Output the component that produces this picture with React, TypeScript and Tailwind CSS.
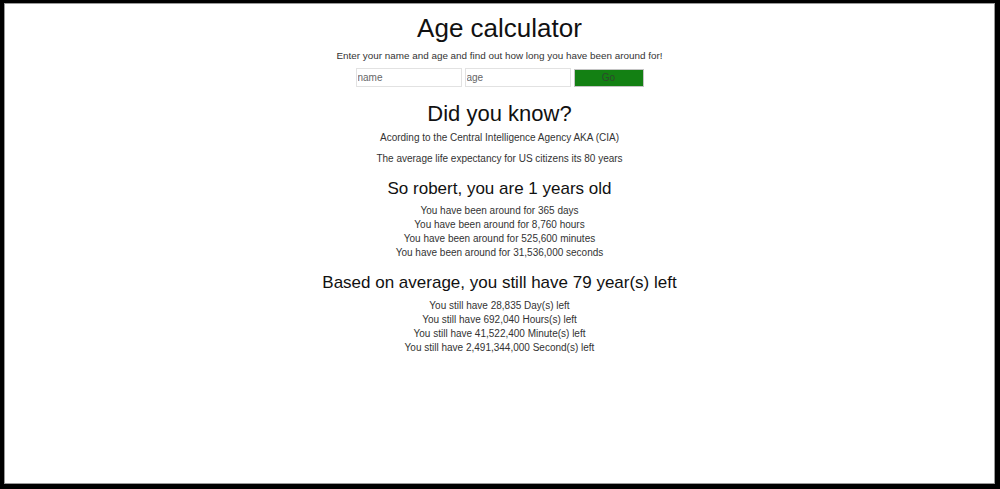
import { useState } from "react";

const font = { fontFamily: '"Liberation Sans", Arial, Helvetica, sans-serif' };

const aroundLines = [
  "You have been around for 365 days",
  "You have been around for 8,760 hours",
  "You have been around for 525,600 minutes",
  "You have been around for 31,536,000 seconds",
];

const leftLines = [
  "You still have 28,835 Day(s) left",
  "You still have 692,040 Hours(s) left",
  "You still have 41,522,400 Minute(s) left",
  "You still have 2,491,344,000 Second(s) left",
];

export default function App() {
  const [name, setName] = useState("");
  const [age, setAge] = useState("");

  return (
    <div className="h-[489px] w-[1000px] bg-black pt-[3px] pl-[4px] pr-[5px] pb-[5px]" style={font}>
      <div className="h-full w-full border border-[#9a9a9a] bg-white text-center">
        <h1 className="pt-[9px] text-[26px] leading-[30px] text-[#111]">Age calculator</h1>
        <p className="mt-[6px] text-[9.9px] leading-[14px] text-[#333]">
          Enter your name and age and find out how long you have been around for!
        </p>

        <div className="mt-[5px] flex justify-center gap-[3px]">
          <input
            value={name}
            onChange={(e) => setName(e.target.value)}
            placeholder="name"
            className="h-[19px] w-[106px] border border-[#e2e2e2] px-[1px] text-[10px] text-[#333] outline-none placeholder:text-[#666]"
          />
          <input
            value={age}
            onChange={(e) => setAge(e.target.value)}
            placeholder="age"
            className="h-[19px] w-[106px] border border-[#e2e2e2] px-[1px] text-[10px] text-[#333] outline-none placeholder:text-[#666]"
          />
          <button className="mt-[1px] h-[18px] w-[70px] border border-[#c4c4c4] bg-[#138013] text-[10px] leading-none text-[#2d4a2d]">
            Go
          </button>
        </div>

        <h2 className="mt-[14px] text-[22px] leading-[26px] text-[#111]">Did you know?</h2>
        <p className="mt-[4px] text-[10px] leading-[14px] text-[#333]">
          Acording to the Central Intelligence Agency AKA (CIA)
        </p>
        <p className="mt-[7px] text-[10px] leading-[14px] text-[#333]">
          The average life expectancy for US citizens its 80 years
        </p>

        <h3 className="mt-[13px] text-[17px] leading-[20px] text-[#111]">So robert, you are 1 years old</h3>
        <div className="mt-[5px] text-[10px] leading-[14px] text-[#333]">
          {aroundLines.map((l) => (
            <p key={l}>{l}</p>
          ))}
        </div>

        <h3 className="mt-[13px] text-[17px] leading-[20px] text-[#111]">
          Based on average, you still have 79 year(s) left
        </h3>
        <div className="mt-[6px] text-[10px] leading-[14px] text-[#333]">
          {leftLines.map((l) => (
            <p key={l}>{l}</p>
          ))}
        </div>
      </div>
    </div>
  );
}
